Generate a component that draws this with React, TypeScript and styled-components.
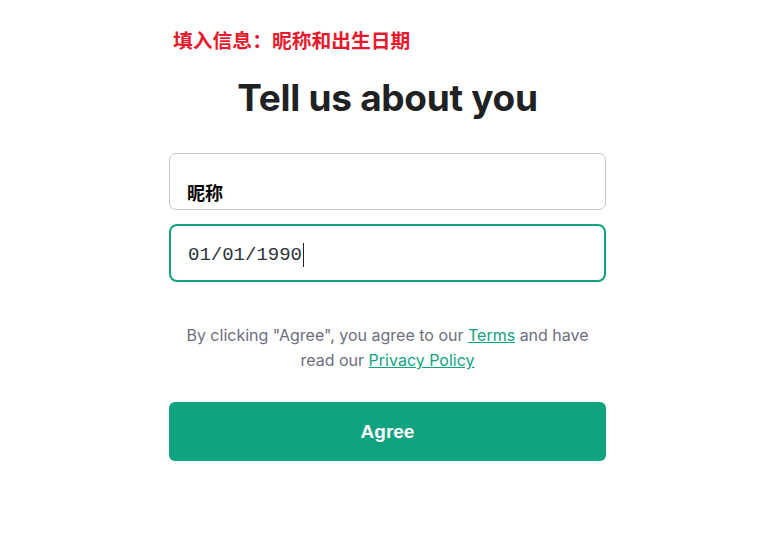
import React from 'react';
import styled, { createGlobalStyle } from 'styled-components';

const GlobalStyle = createGlobalStyle`
  body {
    margin: 0;
    background: #ffffff;
    font-family: Inter, "Noto Sans CJK SC", sans-serif;
  }
`;

export default function App() {
  return (
    <Page>
      <GlobalStyle />
      <Column>
        <Note>填入信息：昵称和出生日期</Note>
        <Title>Tell us about you</Title>
        <Fields>
          <Field>
            <NameValue>昵称</NameValue>
          </Field>
          <Field focused>
            <DateValue>01/01/1990</DateValue>
            <Caret />
          </Field>
        </Fields>
        <Legal>
          By clicking "Agree", you agree to our <Link href="#">Terms</Link> and have
          <br />
          read our <Link href="#">Privacy Policy</Link>
        </Legal>
        <AgreeButton>Agree</AgreeButton>
      </Column>
    </Page>
  );
}

//---------------------------STYLES-------------------------------------------//

const Page = styled.div`
  width: 772px;
  height: 555px;
  display: flex;
  justify-content: center;
  padding-left: 3px;
  box-sizing: border-box;
`;

const Column = styled.div`
  width: 437px;
  display: flex;
  flex-direction: column;
  padding-top: 27px;
`;

const Note = styled.div`
  color: #e8192c;
  font-family: "Noto Sans CJK SC", sans-serif;
  font-weight: 700;
  font-size: 19.8px;
  line-height: 26px;
  padding-left: 4px;
`;

const Title = styled.h1`
  margin: 23px 0 0;
  text-align: center;
  color: #202123;
  font-family: Inter, sans-serif;
  font-weight: 700;
  font-size: 37px;
  letter-spacing: -0.3px;
  line-height: 44px;
`;

const Fields = styled.div`
  margin-top: 33px;
  display: flex;
  flex-direction: column;
  gap: 14px;
`;

const Field = styled.div<{ focused?: boolean }>`
  height: ${p => (p.focused ? '58px' : '57px')};
  box-sizing: border-box;
  border: ${p => (p.focused ? '2px solid #10a37f' : '1px solid #c2c8d0')};
  border-radius: ${p => (p.focused ? '8px' : '7px')};
  display: flex;
  align-items: ${p => (p.focused ? 'center' : 'flex-end')};
  padding: ${p => (p.focused ? '3px 0 0 17px' : '0 0 4px 17px')};
`;

const NameValue = styled.span`
  font-family: "Noto Sans CJK SC", sans-serif;
  font-weight: 700;
  font-size: 18px;
  color: #000000;
  line-height: 26px;
`;

const DateValue = styled.span`
  font-family: "Liberation Mono", monospace;
  font-size: 19px;
  color: #2d333a;
`;

const Caret = styled.span`
  width: 1px;
  height: 24px;
  margin-left: 1px;
  background: #202123;
`;

const Legal = styled.p`
  margin: 41px 0 0;
  text-align: center;
  color: #6e6e80;
  font-family: Inter, sans-serif;
  font-size: 16px;
  line-height: 25px;
`;

const Link = styled.a`
  color: #10a37f;
  text-decoration: underline;
`;

const AgreeButton = styled.button`
  margin-top: 29px;
  height: 59px;
  border: none;
  border-radius: 6px;
  background: #10a37f;
  color: #ffffff;
  font-family: "Liberation Sans", sans-serif;
  font-weight: 700;
  font-size: 19px;
`;
